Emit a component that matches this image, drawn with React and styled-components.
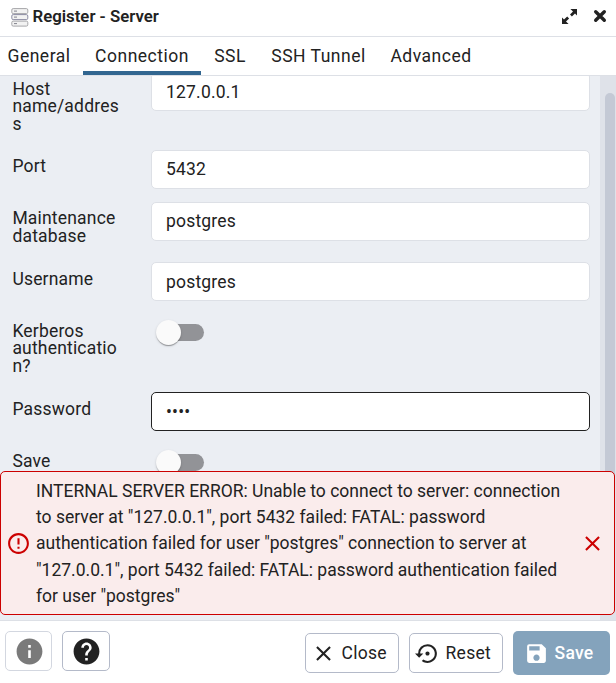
import React from "react";
import styled, { createGlobalStyle } from "styled-components";
import {
  MdClose,
  MdErrorOutline,
  MdHelp,
  MdInfo,
  MdSave,
  MdSettingsBackupRestore,
} from "react-icons/md";

const GlobalStyle = createGlobalStyle`
  * { box-sizing: border-box; }
  body { margin: 0; background: #fff; }
  button, input { font: inherit; color: inherit; letter-spacing: inherit; }
`;

const Dialog = styled.div`
  display: flex;
  flex-direction: column;
  width: 616px;
  height: 683px;
  overflow: hidden;
  background: #fff;
  color: #222;
  font-family: Roboto, sans-serif;
  font-size: 17.5px;
  letter-spacing: 0.19px;
`;

const TitleBar = styled.header`
  display: flex;
  align-items: center;
  height: 37px;
  flex: none;
  padding: 0 9px 3px 11px;
  border-bottom: 1px solid #dde0e6;
`;

const Title = styled.h1`
  flex: 1;
  margin: -1px 0 0 3.5px;
  font-size: 16.8px;
  line-height: 20px;
  font-weight: 600;
  letter-spacing: 0;
`;

const TitleButton = styled.button`
  display: flex;
  padding: 0;
  margin: -1px 0 0 ${(p) => p.$gap || 0}px;
  border: 0;
  background: none;
`;

const TabList = styled.nav`
  display: flex;
  height: 39px;
  flex: none;
  border-bottom: 1px solid #dde0e6;
`;

const Tab = styled.button`
  width: ${(p) => p.$width}px;
  padding: ${(p) => (p.$active ? 3 : 0)}px ${(p) => p.$shift || 0}px 0 0;
  border: 0;
  border-bottom: ${(p) => (p.$active ? "4px solid #326690" : "0")};
  background: none;
  letter-spacing: 0.5px;
  white-space: nowrap;
`;

const Content = styled.main`
  position: relative;
  display: flex;
  height: 545px;
  flex: none;
  overflow: hidden;
  background: #ebeef3;
  border-bottom: 1px solid #dde0e6;
`;

const Form = styled.div`
  flex: 1;
  margin-top: -4.2px;
  padding: 0 10px 0 12px;
`;

const ScrollTrack = styled.div`
  width: 16px;
  padding: 17px 1px 0 5px;
  background: #dfe2e9;
`;

const ScrollThumb = styled.div`
  height: 440px;
  border-radius: 5px;
  background: #c4c9d5;
`;

const Row = styled.div`
  display: grid;
  grid-template-columns: 139px 439px;
  align-items: start;
  margin-bottom: 13px;
`;

const Label = styled.label`
  width: 108px;
  min-height: 39px;
  padding: 8.7px 0 3.7px 0.4px;
  line-height: 17.5px;
  overflow-wrap: anywhere;
`;

const Input = styled.input`
  width: 439px;
  height: 39px;
  padding: 0.6px 14px 0;
  border: 1px solid ${(p) => (p.$focused ? "#222" : "#dde0e6")};
  border-radius: 5px;
  outline: 0;
  background: #fff;
`;

const SwitchTrack = styled.div`
  display: flex;
  align-items: center;
  width: 43px;
  height: 17px;
  margin: 10px 0 0 10px;
  border-radius: 9px;
  background: #929397;
`;

const SwitchThumb = styled.div`
  width: 25px;
  height: 25px;
  margin-left: -5px;
  border-radius: 50%;
  background: #fafafa;
  box-shadow: 0 2px 1px -1px rgba(0, 0, 0, 0.2), 0 1px 1px rgba(0, 0, 0, 0.14),
    0 1px 3px rgba(0, 0, 0, 0.12);
`;

const ErrorToast = styled.div`
  position: absolute;
  left: 0;
  bottom: 5px;
  display: flex;
  align-items: center;
  width: 615px;
  height: 144px;
  padding: 1px 9px 0 5px;
  border: 1px solid #c00;
  border-radius: 5px;
  background: #faecec;
`;

const ErrorText = styled.p`
  width: 530px;
  margin: 0 auto 0 5px;
  letter-spacing: 0;
  line-height: 26.15px;
`;

const Footer = styled.footer`
  display: flex;
  align-items: flex-start;
  height: 62px;
  padding: 10px 2px 0 5px;
`;

const IconButton = styled.button`
  display: flex;
  align-items: center;
  justify-content: center;
  width: ${(p) => (p.$muted ? 47 : 48)}px;
  height: 40px;
  margin-right: 10px;
  padding: 0 0 0 ${(p) => (p.$muted ? 1 : 0)}px;
  border: 1px solid ${(p) => (p.$muted ? "#d3d7e0" : "#b4bac9")};
  border-radius: 5px;
  background: #fff;
  color: ${(p) => (p.$muted ? "#7a7a7a" : "#222")};
`;

const Actions = styled.div`
  display: flex;
  align-items: center;
  gap: 10px;
  margin: 0 4px 0 auto;
`;

const ActionButton = styled.button`
  display: flex;
  align-items: center;
  gap: 5.5px;
  width: ${(p) => (p.$primary ? 97 : 94)}px;
  height: ${(p) => (p.$primary ? 44 : 40)}px;
  padding: 0 0 0 ${(p) => p.$inset}px;
  border: ${(p) => (p.$primary ? "0" : "1px solid #b4bac9")};
  border-radius: 5px;
  background: ${(p) => (p.$primary ? "#84a3bc" : "#fff")};
  color: ${(p) => (p.$primary ? "#fff" : "#222")};
  font-weight: ${(p) => (p.$primary ? 500 : 400)};
  letter-spacing: 0.3px;
  svg { flex: none; margin-top: 1px; }
`;

function ServerIcon() {
  return (
    <svg width="18" height="20" viewBox="0 0 18 20" fill="#f2f2f2">
      <g stroke="#a5a5a8" strokeWidth="1">
        <rect x=".8" y="1.6" width="16" height="5" rx="1.4" />
        <rect x=".8" y="7.6" width="16" height="5" rx="1.4" stroke="#8c8ca3" />
        <rect x=".8" y="14.1" width="16" height="5" rx="1.4" />
      </g>
      <path d="M3 4.1h3M3 10.1h3M3 16.6h3" stroke="#83838d" />
    </svg>
  );
}

function ExpandIcon() {
  return (
    <svg width="17" height="17" viewBox="0 0 17 17" fill="#222">
      <path d="M9.4 1H16v6.5L14 5.4 10.9 8.5 9 6.5 12 3.4ZM7.6 16H1V9.5l2 2.1 3.2-3.1 1.9 2L5 13.6Z" />
    </svg>
  );
}

function CrossIcon() {
  return (
    <svg width="14" height="14" viewBox="0 0 14 14" stroke="#222" strokeWidth="3.4" strokeLinecap="round">
      <path d="m2.7 2.7 8.6 8.6m0-8.6-8.6 8.6" />
    </svg>
  );
}

const tabs = [
  { name: "General", width: 83, shift: 5 },
  { name: "Connection", width: 118, active: true },
  { name: "SSL", width: 58 },
  { name: "SSH Tunnel", width: 119 },
  { name: "Advanced", width: 106 },
];

const fields = [
  { label: "Host name/address", value: "127.0.0.1" },
  { label: "Port", value: "5432" },
  { label: "Maintenance database", value: "postgres" },
  { label: "Username", value: "postgres" },
  { label: "Kerberos authentication?", toggle: true },
  { label: "Password", value: "••••", focused: true },
  { label: "Save", toggle: true },
];

function Field({ label, value, toggle, focused }) {
  return (
    <Row>
      <Label>{label}</Label>
      {toggle ? (
        <SwitchTrack>
          <SwitchThumb />
        </SwitchTrack>
      ) : (
        <Input defaultValue={value} $focused={focused} />
      )}
    </Row>
  );
}

export default function App() {
  return (
    <Dialog>
      <GlobalStyle />
      <TitleBar>
        <ServerIcon />
        <Title>Register - Server</Title>
        <TitleButton aria-label="Maximize"><ExpandIcon /></TitleButton>
        <TitleButton aria-label="Close dialog" $gap={15}><CrossIcon /></TitleButton>
      </TitleBar>
      <TabList>
        {tabs.map(({ name, width, shift, active }) => (
          <Tab key={name} $width={width} $shift={shift} $active={active}>{name}</Tab>
        ))}
      </TabList>
      <Content>
        <Form>
          {fields.map((field) => <Field key={field.label} {...field} />)}
        </Form>
        <ScrollTrack><ScrollThumb /></ScrollTrack>
        <ErrorToast>
          <MdErrorOutline size={25} color="#c00" />
          <ErrorText>
            INTERNAL SERVER ERROR: Unable to connect to server: connection to
            server at "127.0.0.1", port 5432 failed: FATAL: password
            authentication failed for user "postgres" connection to server at
            "127.0.0.1", port 5432 failed: FATAL: password authentication failed
            for user "postgres"
          </ErrorText>
          <MdClose size={25} color="#c00" />
        </ErrorToast>
      </Content>
      <Footer>
        <IconButton $muted aria-label="Information"><MdInfo size={31} /></IconButton>
        <IconButton aria-label="Help"><MdHelp size={31} /></IconButton>
        <Actions>
          <ActionButton $inset={5}><MdClose size={25} />Close</ActionButton>
          <ActionButton $inset={5}><MdSettingsBackupRestore size={25} />Reset</ActionButton>
          <ActionButton $primary $inset={11}><MdSave size={25} />Save</ActionButton>
        </Actions>
      </Footer>
    </Dialog>
  );
}
